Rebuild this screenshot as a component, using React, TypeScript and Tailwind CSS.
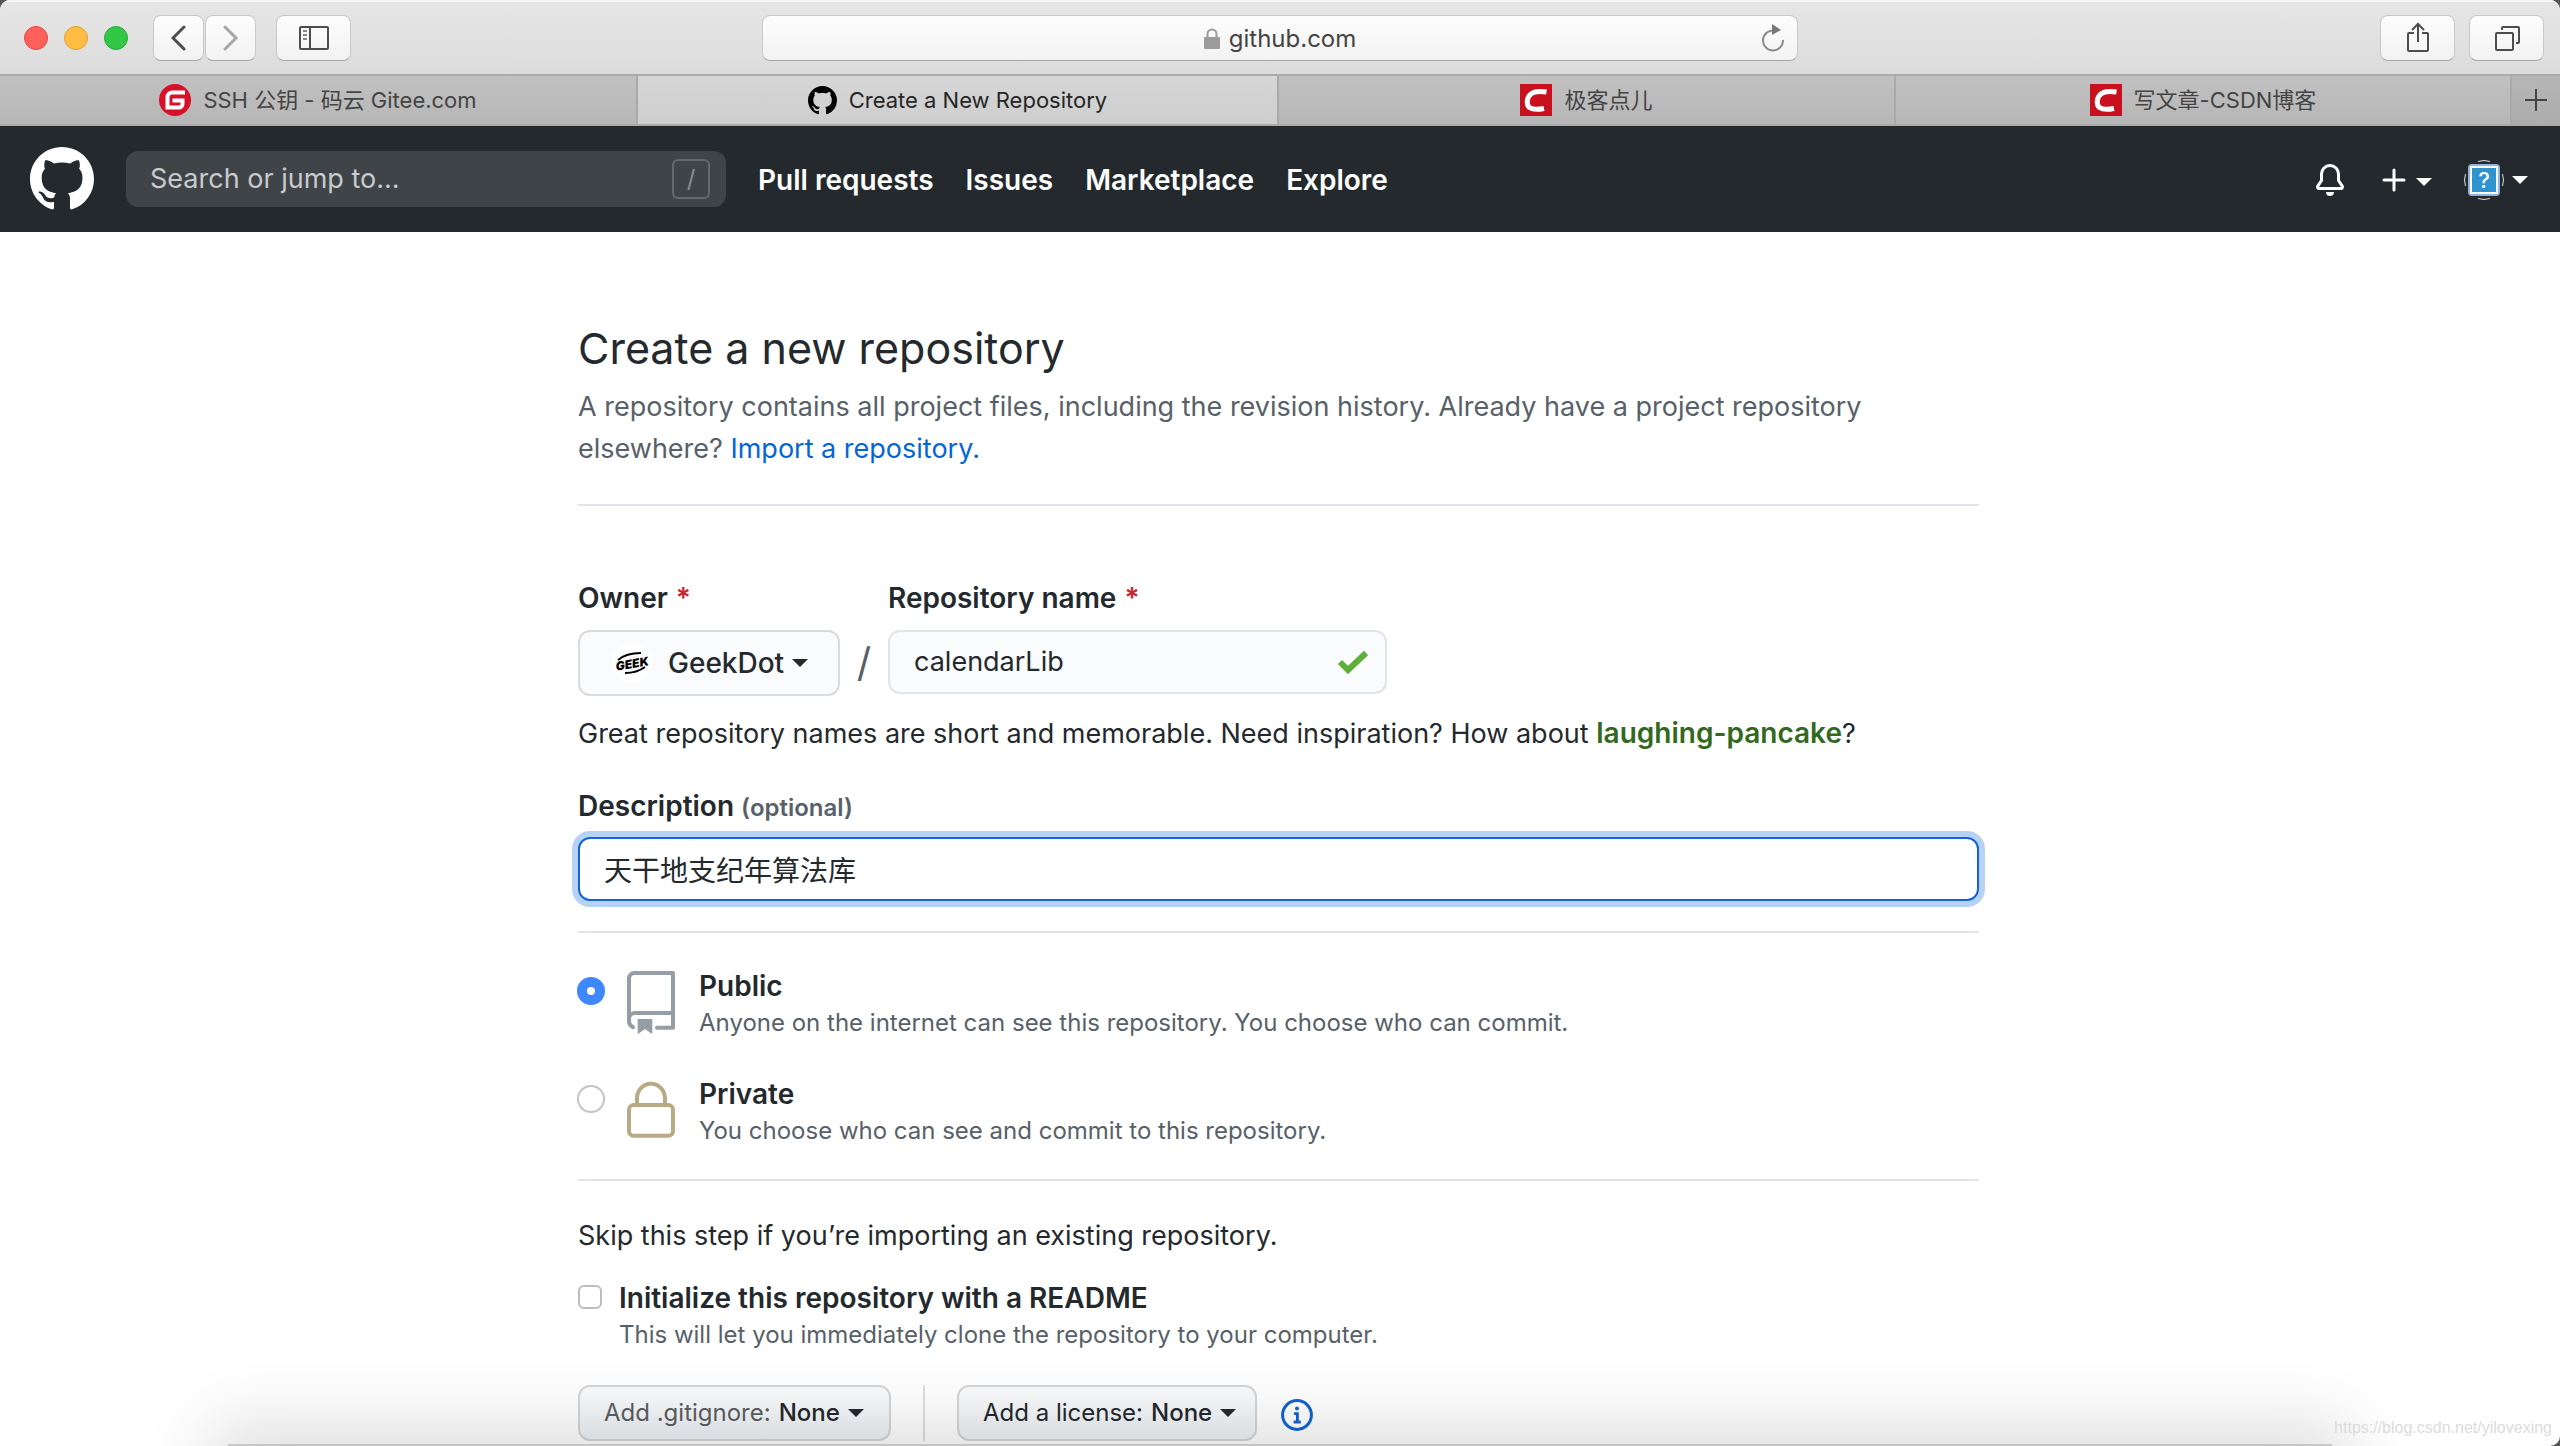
import type { ReactNode } from "react";

const NAV = ["Pull requests", "Issues", "Marketplace", "Explore"];

const GITHUB_MARK =
  "M8 0C3.58 0 0 3.58 0 8c0 3.54 2.29 6.53 5.47 7.59.4.07.55-.17.55-.38 0-.19-.01-.82-.01-1.49-2.01.37-2.53-.49-2.69-.94-.09-.23-.48-.94-.82-1.13-.28-.15-.68-.52-.01-.53.63-.01 1.08.58 1.23.82.72 1.21 1.87.87 2.33.66.07-.52.28-.87.51-1.07-1.78-.2-3.64-.89-3.64-3.95 0-.87.31-1.59.82-2.15-.08-.2-.36-1.02.08-2.12 0 0 .67-.21 2.2.82.64-.18 1.32-.27 2-.27.68 0 1.36.09 2 .27 1.53-1.04 2.2-.82 2.2-.82.44 1.1.16 1.92.08 2.12.51.56.82 1.27.82 2.15 0 3.07-1.87 3.75-3.65 3.95.29.25.54.73.54 1.48 0 1.07-.01 1.93-.01 2.2 0 .21.15.46.55.38A8.013 8.013 0 0016 8c0-4.42-3.58-8-8-8z";

function GithubMark({ className }: { className: string }) {
  return (
    <svg viewBox="0 0 16 16" className={className} fill="currentColor">
      <path fillRule="evenodd" d={GITHUB_MARK} />
    </svg>
  );
}

function CsdnIcon() {
  return (
    <svg viewBox="0 0 32 32" className="size-8">
      <path fill="#c8101f" d="M0 0h32v32H0z" />
      <path d="M26.5 8C21 7.2 15 7 11.5 9.5 6.5 13 6 20.5 9.5 23.5c3.5 2.5 9.5 2 14.5 1" fill="none" stroke="#fff" strokeWidth="5" />
    </svg>
  );
}

function GiteeIcon() {
  return (
    <svg viewBox="0 0 32 32" className="size-8">
      <circle cx="16" cy="16" r="16" fill="#d8112b" />
      <path d="M26 8.5H13A4.5 4.5 0 0 0 8.5 13v10.5H20a3.5 3.5 0 0 0 3.5-3.5v-3.5H13.5" fill="none" stroke="#fff" strokeWidth="4" />
    </svg>
  );
}

function Caret({ className = "" }: { className?: string }) {
  return (
    <svg viewBox="0 0 16 8" className={`h-2 w-4 ${className}`} fill="currentColor">
      <path d="M0 0h16L8 8z" />
    </svg>
  );
}

function ToolbarButton({ label, className, children }: { label: string; className: string; children: ReactNode }) {
  return (
    <button
      aria-label={label}
      className={`flex h-[46px] items-center justify-center rounded-lg border border-[#c9c9c9] border-b-[#a8a8a8] bg-linear-to-b from-[#fdfdfd] to-[#f2f2f2] text-[#4d4d4d] ${className}`}
    >
      {children}
    </button>
  );
}

function Tab({ icon, title, active = false, className }: { icon: ReactNode; title: string; active?: boolean; className: string }) {
  return (
    <a
      href="#"
      className={`flex items-center justify-center gap-3 border-r-2 border-[#a9a9a9] text-[22px] ${
        active ? "bg-linear-to-b from-[#d6d6d6] to-[#cecece] text-[#262626]" : "bg-linear-to-b from-[#c1c1c1] to-[#b6b6b6] text-[#444]"
      } ${className}`}
    >
      {icon}
      <span>{title}</span>
    </a>
  );
}

function Browser() {
  return (
    <div className="bg-linear-to-b from-[#e6e6e6] to-[#d5d5d5]">
      <div className="flex h-[74px] items-center border-t-2 border-[#f5f5f5] pr-4 pl-6">
        <div className="flex w-[129px] gap-4">
          <span className="size-6 rounded-full border border-[#e2463f] bg-[#ff605c]" />
          <span className="size-6 rounded-full border border-[#e0a030] bg-[#ffbd44]" />
          <span className="size-6 rounded-full border border-[#24ab35] bg-[#33c748]" />
        </div>
        <ToolbarButton label="Back" className="w-[51px]">
          <svg viewBox="0 0 16 26" className="h-[26px] w-4" fill="none" stroke="currentColor" strokeWidth="3" strokeLinecap="round">
            <path d="M13 2 2 13l11 11" />
          </svg>
        </ToolbarButton>
        <ToolbarButton label="Forward" className="ml-px w-[51px]">
          <svg viewBox="0 0 16 26" className="h-[26px] w-4" fill="none" stroke="#a8a8a8" strokeWidth="3" strokeLinecap="round">
            <path d="M2 2l11 11L2 24" />
          </svg>
        </ToolbarButton>
        <ToolbarButton label="Sidebar" className="ml-5 w-[75px]">
          <svg viewBox="0 0 32 26" className="h-[26px] w-8" fill="none" stroke="currentColor" strokeWidth="2">
            <rect x="2" y="2" width="28" height="22" rx="1" />
            <path d="M12 2v22" />
            <path d="M5 6h4M5 10h4M5 14h4" stroke="#888" />
          </svg>
        </ToolbarButton>
        <div className="mr-[172px] flex flex-1 justify-center">
          <div className="flex h-[46px] w-[1036px] items-center rounded-lg border border-[#c9c9c9] border-b-[#a8a8a8] bg-linear-to-b from-[#fdfdfd] to-[#f2f2f2] pr-3">
            <div className="flex flex-1 items-center justify-center gap-2 pt-0.5 pl-9 text-2xl text-[#444]">
              <svg viewBox="0 0 18 22" className="h-[22px] w-[18px]">
                <rect x="1" y="9" width="16" height="12" rx="1" fill="#9b9b9b" />
                <path d="M4.5 9V6a4.5 4.5 0 0 1 9 0v3" fill="none" stroke="#9b9b9b" strokeWidth="2" />
              </svg>
              github.com
            </div>
            <button aria-label="Reload">
              <svg viewBox="0 0 24 28" className="h-7 w-6">
                <path d="M13 6.500A10 10 0 1 0 22 16" fill="none" stroke="#8a8a8a" strokeWidth="2" />
                <path d="M11 0v11l9-5z" fill="#777" />
              </svg>
            </button>
          </div>
        </div>
        <ToolbarButton label="Share" className="w-[75px]">
          <svg viewBox="0 0 24 32" className="mb-0.5 h-8 w-6" fill="none" stroke="currentColor" strokeWidth="2">
            <path d="M8 12H3a1 1 0 0 0-1 1v16a1 1 0 0 0 1 1h18a1 1 0 0 0 1-1V13a1 1 0 0 0-1-1h-5M12 21V2M6 9l6-6 6 6" />
          </svg>
        </ToolbarButton>
        <ToolbarButton label="Show tabs" className="ml-[14px] w-[75px]">
          <svg viewBox="0 0 26 26" className="size-[26px]" fill="none" stroke="currentColor" strokeWidth="2">
            <rect x="2" y="8" width="17" height="17" rx="1" />
            <path d="M8 5V3a1 1 0 0 1 1-1h15a1 1 0 0 1 1 1v14a1 1 0 0 1-1 1h-2" />
          </svg>
        </ToolbarButton>
      </div>
      <div className="flex h-[52px] border-y-2 border-[#ababab]">
        <Tab icon={<GiteeIcon />} title="SSH 公钥 - 码云 Gitee.com" className="flex-[638]" />
        <Tab icon={<GithubMark className="size-[29px] text-black" />} title="Create a New Repository" active className="flex-[641]" />
        <Tab icon={<CsdnIcon />} title="极客点儿" className="flex-[617]" />
        <Tab icon={<CsdnIcon />} title="写文章-CSDN博客" className="flex-[616]" />
        <button aria-label="New tab" className="flex w-12 items-center justify-center bg-linear-to-b from-[#b6b6b6] to-[#acacac] text-[#444]">
          <svg viewBox="0 0 24 24" className="size-6" stroke="currentColor" strokeWidth="2">
            <path d="M12 1v22M1 12h22" />
          </svg>
        </button>
      </div>
    </div>
  );
}

function Header() {
  return (
    <header className="flex h-[106px] items-center bg-[#24292e] pr-8 pl-[30px] text-white">
      <a href="#" aria-label="Homepage">
        <GithubMark className="size-16" />
      </a>
      <div className="ml-8 flex h-14 w-[600px] items-center rounded-xl bg-[#3f4448] pr-4 pl-6">
        <input aria-label="Search" placeholder="Search or jump to..." className="min-w-0 flex-1 bg-transparent text-[27px] outline-none placeholder:text-[#c8cacc]" />
        <span className="flex h-10 w-[38px] items-center justify-center rounded-md border-2 border-[#65696d] text-2xl text-[#898d90]">/</span>
      </div>
      <nav className="mt-0.5 ml-8 flex gap-8 text-[28px] font-semibold">
        {NAV.map((item) => (
          <a key={item} href="#">
            {item}
          </a>
        ))}
      </nav>
      <div className="mt-0.5 ml-auto flex items-center">
        <button aria-label="Notifications">
          <svg viewBox="0 0 16 16" className="size-8" fill="currentColor">
            <path d="M8 16a2 2 0 001.985-1.75c.017-.137-.097-.25-.235-.25h-3.5c-.138 0-.252.113-.235.25A2 2 0 008 16z" />
            <path
              fillRule="evenodd"
              d="M8 1.5A3.5 3.5 0 004.5 5v2.947c0 .346-.102.683-.294.97l-1.703 2.556a.018.018 0 00-.003.01l.001.006c0 .002.002.004.004.006a.017.017 0 00.006.004l.007.001h10.964l.007-.001a.016.016 0 00.006-.004.016.016 0 00.004-.006l.001-.007a.017.017 0 00-.003-.01l-1.703-2.554a1.75 1.75 0 01-.294-.97V5A3.5 3.5 0 008 1.5zM3 5a5 5 0 0110 0v2.947c0 .05.015.098.042.139l1.703 2.555A1.518 1.518 0 0113.482 13H2.518a1.518 1.518 0 01-1.263-2.36l1.703-2.554A.25.25 0 003 7.947V5z"
            />
          </svg>
        </button>
        <button aria-label="Create new" className="ml-9 flex items-center gap-[10px]">
          <svg viewBox="0 0 24 24" className="size-6" stroke="currentColor" strokeWidth="3" strokeLinecap="round">
            <path d="M12 2v20M2 12h20" />
          </svg>
          <Caret className="mt-1" />
        </button>
        <button aria-label="Account" className="ml-8 flex items-center gap-2">
          <svg viewBox="0 0 40 40" className="size-10">
            <path d="M14 1.5q6-2 12 0M14 38.5q6 2 12 0M1.5 14q-2 6 0 12M38.5 14q2 6 0 12" fill="none" stroke="#ddd" strokeWidth="1" />
            <rect x="4" y="4" width="32" height="32" rx="4" fill="#8fb4e0" />
            <rect x="7" y="7" width="26" height="26" fill="#2f93cf" stroke="#fff" strokeWidth="2" />
            <text x="20" y="28" textAnchor="middle" fill="#fff" fontSize="22" fontWeight="500" fontFamily="Inter">
              ?
            </text>
          </svg>
          <Caret />
        </button>
      </div>
    </header>
  );
}

function Required() {
  return <span className="ml-2 text-[#cb2431]">*</span>;
}

function Visibility({ id, title, note, icon, checked }: { id: string; title: string; note: string; icon: ReactNode; checked?: boolean }) {
  return (
    <div className="flex">
      <input
        id={id}
        type="radio"
        name="visibility"
        defaultChecked={checked}
        className="mt-3 -ml-px size-7 appearance-none rounded-full border-2 border-[#c4c4c4] bg-white checked:border-[10px] checked:border-[#3f87fc]"
      />
      <span className="ml-5 flex w-[52px] justify-center">{icon}</span>
      <label htmlFor={id} className="ml-[22px]">
        <strong className="block text-[28px] leading-[42px] font-semibold">{title}</strong>
        <span className="block text-2xl leading-8 text-[#586069]">{note}</span>
      </label>
    </div>
  );
}

export default function App() {
  return (
    <div className="bg-[#555]">
      <div className="relative h-screen overflow-hidden rounded-t-[10px] rounded-br-[10px] bg-white font-[Inter,'Noto_Sans_CJK_SC',sans-serif] text-[27px] leading-[42px] text-[#24292e]">
        <Browser />
        <Header />
        <main className="mx-auto mt-20 w-full max-w-[1404px] pr-[3px]">
          <h1 className="text-[43px] leading-[72px]">Create a new repository</h1>
          <p className="mt-0.5 text-[#586069]">
            A repository contains all project files, including the revision history. Already have a project repository
            <br />
            elsewhere?{" "}
            <a href="#" className="text-[#0366d6]">
              Import a repository.
            </a>
          </p>
          <hr className="mt-[34px] border-t-2 border-[#e1e4e8]" />

          <form>
            <div className="mt-[71px] flex">
              <div className="w-[262px]">
                <label htmlFor="owner" className="text-[28px] font-semibold">
                  Owner
                  <Required />
                </label>
                <button
                  id="owner"
                  type="button"
                  className="mt-[10px] flex h-[66px] w-full items-center rounded-xl border-2 border-[#d9dbdd] bg-[#fafbfc] pl-8 text-[28px] font-medium"
                >
                  <svg viewBox="0 0 40 40" className="size-10">
                    <circle cx="20" cy="20" r="20" fill="#fff" />
                    <text x="20" y="25" textAnchor="middle" fontSize="12" fontWeight="900" fontStyle="italic" fontFamily="Inter" transform="rotate(-10 20 20)">
                      GEEK
                    </text>
                    <path d="M6 17Q14 10 29 10M13 30q12 0 20-6" fill="none" stroke="#000" strokeWidth="2" />
                  </svg>
                  <span className="ml-4">GeekDot</span>
                  <Caret className="ml-2" />
                </button>
              </div>
              <span className="w-12 pt-[54px] text-center text-[40px] leading-[64px] text-[#586069]">/</span>
              <div className="w-[499px]">
                <label htmlFor="repo" className="text-[28px] font-semibold">
                  Repository name
                  <Required />
                </label>
                <div className="mt-[10px] flex h-16 items-center rounded-xl border-2 border-[#e1e4e8] bg-[#fafbfc] pr-4 pl-6">
                  <input id="repo" defaultValue="calendarLib" className="min-w-0 flex-1 bg-transparent outline-none" />
                  <svg viewBox="0 0 32 24" className="h-6 w-8">
                    <path d="M3 12l8 8L29 3" fill="none" stroke="#5eae3a" strokeWidth="6" />
                  </svg>
                </div>
              </div>
            </div>
            <p className="mt-4">
              Great repository names are short and memorable. Need inspiration? How about{" "}
              <strong className="text-[28px] font-semibold text-[#33691e]">laughing-pancake</strong>?
            </p>
            <label htmlFor="description" className="mt-[30px] block text-[28px] font-semibold">
              Description <span className="text-2xl text-[#586069]">(optional)</span>
            </label>
            <input
              id="description"
              defaultValue="天干地支纪年算法库"
              className="mt-[10px] block h-16 w-full rounded-xl border-2 border-[#1264d8] bg-white px-6 text-[28px] ring-6 ring-[#b7d2f4] outline-none"
            />
            <hr className="mt-[30px] border-t-2 border-[#e1e4e8]" />

            <div className="mt-8 flex flex-col gap-[34px]">
              <Visibility
                id="public"
                title="Public"
                note="Anyone on the internet can see this repository. You choose who can commit."
                checked
                icon={
                  <svg viewBox="0 0 24 24" className="mt-[6px] size-16 shrink-0" fill="#959da5">
                    <path
                      fillRule="evenodd"
                      d="M3 2.75A2.75 2.75 0 015.75 0h14.5a.75.75 0 01.75.75v20.5a.75.75 0 01-.75.75h-6a.75.75 0 010-1.5h5.25v-4H6A1.5 1.5 0 004.5 18v.75c0 .716.43 1.334 1.05 1.605a.75.75 0 01-.6 1.374A3.25 3.25 0 013 18.75v-16zM19.5 1.5V15H6c-.546 0-1.059.146-1.5.401V2.75c0-.69.56-1.25 1.25-1.25H19.5z"
                    />
                    <path d="M7 18.25a.25.25 0 01.25-.25h5a.25.25 0 01.25.25v5.01a.25.25 0 01-.397.201l-2.206-1.604a.25.25 0 00-.294 0L7.397 23.46a.25.25 0 01-.397-.2v-5.01z" />
                  </svg>
                }
              />
              <Visibility
                id="private"
                title="Private"
                note="You choose who can see and commit to this repository."
                icon={
                  <svg viewBox="0 0 24 24" className="mt-[6px] size-16 shrink-0" fill="#b8aa84">
                    <path
                      fillRule="evenodd"
                      d="M6 9V7.25C6 3.845 8.503 1 12 1s6 2.845 6 6.25V9h.5a2.5 2.5 0 012.5 2.5v8a2.5 2.5 0 01-2.5 2.5h-13A2.5 2.5 0 013 19.5v-8A2.5 2.5 0 015.5 9H6zm1.5-1.75C7.5 4.58 9.422 2.5 12 2.5c2.578 0 4.5 2.08 4.5 4.75V9h-9V7.25zm-3 4.25a1 1 0 011-1h13a1 1 0 011 1v8a1 1 0 01-1 1h-13a1 1 0 01-1-1v-8z"
                    />
                  </svg>
                }
              />
            </div>
            <hr className="mt-8 border-t-2 border-[#e1e4e8]" />

            <p className="mt-[34px]">Skip this step if you’re importing an existing repository.</p>
            <div className="mt-5 flex">
              <input id="readme" type="checkbox" className="mt-2 size-6 appearance-none rounded-md border-2 border-[#bdbdbd] bg-white" />
              <label htmlFor="readme" className="ml-[17px]">
                <strong className="block text-[28px] font-semibold">Initialize this repository with a README</strong>
                <span className="block text-2xl leading-8 text-[#586069]">This will let you immediately clone the repository to your computer.</span>
              </label>
            </div>
            <div className="mt-[34px] flex items-center text-2xl">
              <button
                type="button"
                className="flex h-14 w-[313px] items-center rounded-xl border-2 border-[#d4d6d8] bg-linear-to-b from-[#fafbfc] to-[#eff3f6] pl-6 font-medium"
              >
                <span className="mr-2 font-normal text-[#5c5f62]">Add .gitignore:</span> None
                <Caret className="ml-2" />
              </button>
              <span className="mx-8 h-14 w-0.5 bg-[#dddfe2]" />
              <button
                type="button"
                className="flex h-14 w-[300px] items-center rounded-xl border-2 border-[#d4d6d8] bg-linear-to-b from-[#fafbfc] to-[#eff3f6] pl-6 font-medium"
              >
                <span className="mr-2 font-normal">Add a license:</span> None
                <Caret className="ml-2" />
              </button>
              <svg viewBox="0 0 16 16" className="mt-1 ml-6 size-8" fill="none" stroke="#1264d1">
                <circle cx="8" cy="8" r="7.2" strokeWidth="1.5" />
                <path d="M6.5 7.3h1.700v4M6.3 11.5h3.6" strokeWidth="1.4" />
                <circle cx="8" cy="4.7" r="1" fill="#1264d1" stroke="none" />
              </svg>
            </div>
          </form>
        </main>

        {/* Soft shadow rising from the bottom edge */}
        <div className="pointer-events-none absolute inset-x-[230px] top-full h-10 shadow-[0_0_70px_20px_rgba(0,0,0,0.14),0_0_0_2px_rgba(0,0,0,0.15)]" />
        <span className="absolute right-2 bottom-1 font-['Liberation_Sans'] text-base leading-7 text-[#dcdcdc]">https://blog.csdn.net/yilovexing</span>
      </div>
    </div>
  );
}
